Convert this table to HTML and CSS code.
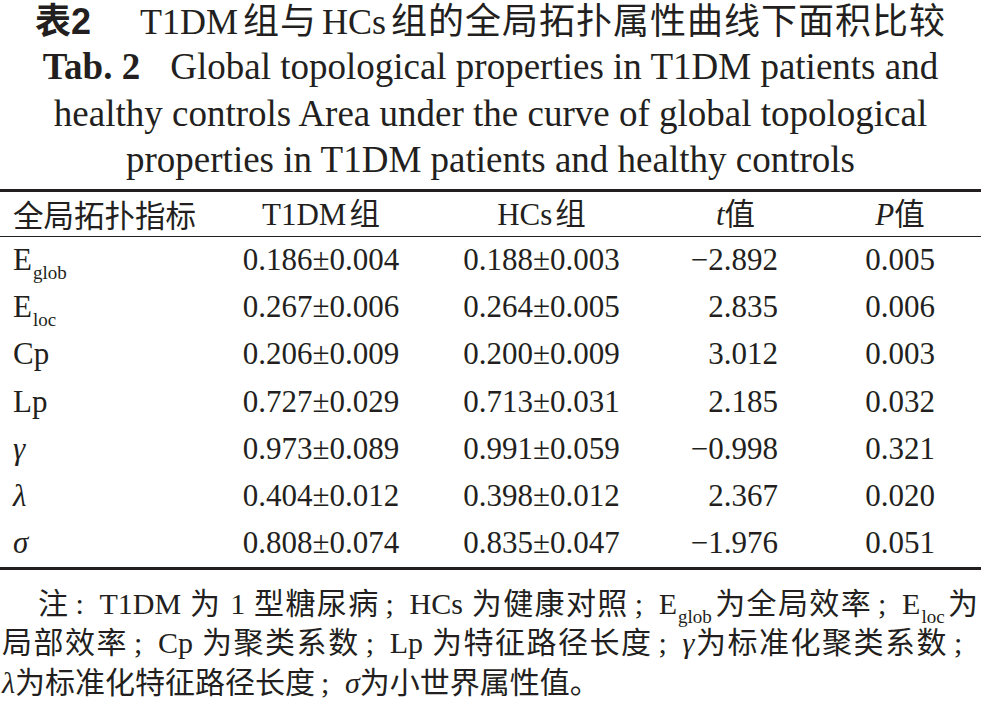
FILE: index.html
```html
<!DOCTYPE html>
<html lang="zh">
<head>
<meta charset="utf-8">
<title>表2 T1DM组与HCs组的全局拓扑属性曲线下面积比较</title>
<link rel="stylesheet" href="styles.css">
</head>
<body>
<div class="page">
  <div class="title">
    <div class="title-cn"><span class="tab-cn">表2</span><span class="gap"></span><span class="lat">T1DM</span>组与<span class="lat">HCs</span>组的全局拓扑属性曲线下面积比较</div>
    <div class="title-en"><b>Tab. 2</b><span class="gap-en"></span>Global topological properties in T1DM patients and<br>healthy controls Area under the curve of global topological<br>properties in T1DM patients and healthy controls</div>
  </div>

  <div class="table">
    <div class="row head">
      <div class="c1 cjk">全局拓扑指标</div>
      <div class="c2">T1DM<span class="cjk sp">组</span></div>
      <div class="c3">HCs<span class="cjk sp">组</span></div>
      <div class="c4"><i>t</i><span class="cjk">值</span></div>
      <div class="c5"><i>P</i><span class="cjk">值</span></div>
    </div>
    <div class="row">
      <div class="c1">E<span class="sub">glob</span></div>
      <div class="c2">0.186±0.004</div>
      <div class="c3">0.188±0.003</div>
      <div class="c4">−2.892</div>
      <div class="c5">0.005</div>
    </div>
    <div class="row">
      <div class="c1">E<span class="sub">loc</span></div>
      <div class="c2">0.267±0.006</div>
      <div class="c3">0.264±0.005</div>
      <div class="c4">2.835</div>
      <div class="c5">0.006</div>
    </div>
    <div class="row">
      <div class="c1">Cp</div>
      <div class="c2">0.206±0.009</div>
      <div class="c3">0.200±0.009</div>
      <div class="c4">3.012</div>
      <div class="c5">0.003</div>
    </div>
    <div class="row">
      <div class="c1">Lp</div>
      <div class="c2">0.727±0.029</div>
      <div class="c3">0.713±0.031</div>
      <div class="c4">2.185</div>
      <div class="c5">0.032</div>
    </div>
    <div class="row">
      <div class="c1"><i>γ</i></div>
      <div class="c2">0.973±0.089</div>
      <div class="c3">0.991±0.059</div>
      <div class="c4">−0.998</div>
      <div class="c5">0.321</div>
    </div>
    <div class="row">
      <div class="c1"><i>λ</i></div>
      <div class="c2">0.404±0.012</div>
      <div class="c3">0.398±0.012</div>
      <div class="c4">2.367</div>
      <div class="c5">0.020</div>
    </div>
    <div class="row">
      <div class="c1"><i>σ</i></div>
      <div class="c2">0.808±0.074</div>
      <div class="c3">0.835±0.047</div>
      <div class="c4">−1.976</div>
      <div class="c5">0.051</div>
    </div>
  </div>

  <div class="note">
    <span class="line first">注<span class="pn">:</span>T1DM 为 1 型糖尿病<span class="pn">;</span>HCs 为健康对照<span class="pn">;</span>E<span class="nsub">glob</span>为全局效率<span class="pn">;</span>E<span class="nsub">loc</span>为</span>
    <span class="line">局部效率<span class="pn">;</span>Cp 为聚类系数<span class="pn">;</span>Lp 为特征路径长度<span class="pn">;</span><i>γ</i>为标准化聚类系数<span class="pn">;</span></span>
    <span class="line last"><i>λ</i>为标准化特征路径长度<span class="pn">;</span><i>σ</i>为小世界属性值。</span>
  </div>
</div>
</body>
</html>
```

FILE: styles.css
```css
html, body {
  margin: 0;
  padding: 0;
  background: #ffffff;
}

body {
  color: #231f20;
  font-family: "Liberation Serif", "Noto Sans CJK SC", serif;
}

.page {
  width: 981px;
}

/* ---------- caption ---------- */
.title {
  text-align: center;
}

.title-cn {
  font-family: "Liberation Serif", "Noto Sans CJK SC", serif;
  font-size: 36px;
  line-height: 44px;
  height: 44px;
  letter-spacing: 1px;
  white-space: nowrap;
}

.tab-cn {
  font-family: "Liberation Sans", "Noto Sans CJK SC", sans-serif;
  font-weight: 700;
  letter-spacing: 0;
}

.gap {
  display: inline-block;
  width: 44px;
}

.lat {
  margin: 0 5px;
  letter-spacing: 0;
}

.title-en {
  font-size: 37px;
  line-height: 46.5px;
  white-space: nowrap;
}

.title-en b {
  font-weight: 700;
}

.gap-en {
  display: inline-block;
  width: 30px;
}

/* ---------- table ---------- */
.table {
  margin-top: 5px;
  border-top: 3px solid #231f20;
  border-bottom: 3px solid #231f20;
  font-size: 31px;
}

.row {
  display: grid;
  grid-template-columns: 226px 190px 251px 137px 1fr;
  height: 47.2px;
  align-items: center;
  line-height: 34px;
  white-space: nowrap;
}

.row.head {
  height: 44px;
  border-bottom: 1.5px solid #231f20;
}

.cjk {
  font-family: "Noto Sans CJK SC", sans-serif;
  font-size: 30.5px;
}

.sp {
  margin-left: 3px;
}

.c1 {
  padding-left: 13px;
}

.c2,
.c3 {
  text-align: center;
}

.c4 {
  text-align: right;
  padding-right: 26px;
}

.head .c4 {
  text-align: center;
  padding-right: 0;
}

.c5 {
  text-align: center;
  padding-left: 15px;
}

.sub {
  font-size: 19px;
  line-height: 0;
  vertical-align: -0.45em;
  margin-left: 1px;
}

/* ---------- note ---------- */
.note {
  padding: 14px 3px 0 2px;
  font-family: "Liberation Serif", "Noto Sans CJK SC", serif;
  font-size: 30px;
  line-height: 39.5px;
}

.note .line {
  display: block;
  text-align: justify;
  text-align-last: justify;
  white-space: nowrap;
}

.note .line.first {
  text-indent: 36px;
}

.note .line.last {
  text-align: left;
  text-align-last: left;
}

.pn {
  display: inline-block;
  width: 30px;
  text-align: center;
  text-indent: 0;
  padding-left: 6px;
  box-sizing: border-box;
}

.nsub {
  font-size: 19px;
  line-height: 0;
  vertical-align: -0.5em;
  margin: 0 2px 0 1px;
}
```
